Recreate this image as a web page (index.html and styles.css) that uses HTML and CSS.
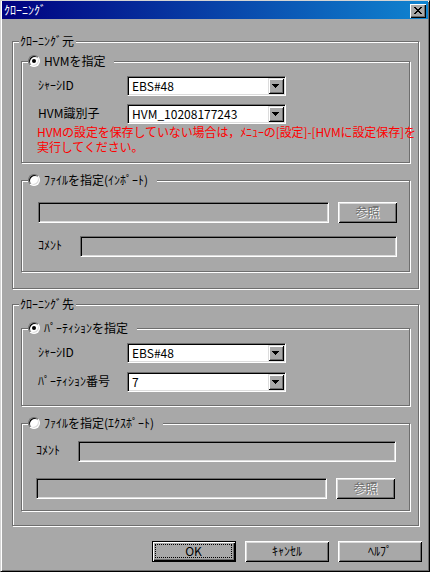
FILE: index.html
```html
<!DOCTYPE html>
<html lang="ja">
<head>
<meta charset="utf-8">
<title>ｸﾛｰﾆﾝｸﾞ</title>
<link rel="stylesheet" href="styles.css">
</head>
<body>
<div class="window">
  <div class="titlebar">
    <span class="title">ｸﾛｰﾆﾝｸﾞ</span>
    <span class="close"><svg width="8" height="7" viewBox="0 0 8 7"><path fill="#000" d="M0 0h2v1H0zM6 0h2v1H6zM1 1h2v1H1zM5 1h2v1H5zM2 2h4v1H2zM3 3h2v1H3zM2 4h4v1H2zM1 5h2v1H1zM5 5h2v1H5zM0 6h2v1H0zM6 6h2v1H6z"/></svg></span>
  </div>
  <div class="content">
    <div class="group outer g-src">
      <span class="legend">ｸﾛｰﾆﾝｸﾞ元</span>
      <div class="group sub sub-a">
        <span class="legend radio-legend"><span class="radio on"></span><span>HVMを指定</span></span>
        <div class="form form-a">
          <span class="label">ｼｬｰｼID</span>
          <div class="combo"><span class="combo-text">EBS#48</span><span class="combo-btn"><svg width="7" height="4" viewBox="0 0 7 4"><path fill="#000" d="M0 0h7v1H0zM1 1h5v1H1zM2 2h3v1H2zM3 3h1v1H3z"/></svg></span></div>
          <span class="label">HVM識別子</span>
          <div class="combo"><span class="combo-text">HVM_10208177243</span><span class="combo-btn"><svg width="7" height="4" viewBox="0 0 7 4"><path fill="#000" d="M0 0h7v1H0zM1 1h5v1H1zM2 2h3v1H2zM3 3h1v1H3z"/></svg></span></div>
        </div>
        <div class="warn">
          <span class="warn-line">HVMの設定を保存していない場合は，ﾒﾆｭｰの[設定]-[HVMに設定保存]を</span>
          <span class="warn-line">実行してください。</span>
        </div>
      </div>
      <div class="group sub sub-b">
        <span class="legend radio-legend"><span class="radio"></span><span>ﾌｧｲﾙを指定(ｲﾝﾎﾟｰﾄ)</span></span>
        <div class="path-row">
          <span class="field path"></span>
          <span class="btn small disabled">参照</span>
        </div>
        <div class="comment-row">
          <span class="label">ｺﾒﾝﾄ</span>
          <span class="field grow"></span>
        </div>
      </div>
    </div>

    <div class="group outer g-dst">
      <span class="legend">ｸﾛｰﾆﾝｸﾞ先</span>
      <div class="group sub sub-c">
        <span class="legend radio-legend"><span class="radio on"></span><span>ﾊﾟｰﾃｨｼｮﾝを指定</span></span>
        <div class="form form-c">
          <span class="label">ｼｬｰｼID</span>
          <div class="combo"><span class="combo-text">EBS#48</span><span class="combo-btn"><svg width="7" height="4" viewBox="0 0 7 4"><path fill="#000" d="M0 0h7v1H0zM1 1h5v1H1zM2 2h3v1H2zM3 3h1v1H3z"/></svg></span></div>
          <span class="label">ﾊﾟｰﾃｨｼｮﾝ番号</span>
          <div class="combo"><span class="combo-text">7</span><span class="combo-btn"><svg width="7" height="4" viewBox="0 0 7 4"><path fill="#000" d="M0 0h7v1H0zM1 1h5v1H1zM2 2h3v1H2zM3 3h1v1H3z"/></svg></span></div>
        </div>
      </div>
      <div class="group sub sub-d">
        <span class="legend radio-legend"><span class="radio"></span><span>ﾌｧｲﾙを指定(ｴｸｽﾎﾟｰﾄ)</span></span>
        <div class="comment-row">
          <span class="label">ｺﾒﾝﾄ</span>
          <span class="field grow"></span>
        </div>
        <div class="path-row d-path">
          <span class="field path"></span>
          <span class="btn small disabled">参照</span>
        </div>
      </div>
    </div>

    <div class="actions">
      <span class="btn default"><span class="focus">OK</span></span>
      <span class="btn">ｷｬﾝｾﾙ</span>
      <span class="btn">ﾍﾙﾌﾟ</span>
    </div>
  </div>
</div>
</body>
</html>
```
FILE: styles.css
```css
* { box-sizing: border-box; }
html, body { margin: 0; padding: 0; }
body {
  width: 430px;
  height: 572px;
  background: #a8a8a8;
  font-family: "Noto Sans CJK JP", "Liberation Sans", sans-serif;
  font-size: 12px;
  line-height: 12px;
  color: #000;
}
.window {
  width: 430px;
  height: 572px;
  border: 1px solid;
  border-color: #d4d4d4 #000 #000 #d4d4d4;
  box-shadow: inset 1px 1px #fff, inset -1px -1px #6e6e6e;
  padding: 0 1px 1px 1px;
  background: #a8a8a8;
  display: flex;
  flex-direction: column;
}
.titlebar {
  height: 18px;
  flex: none;
  display: flex;
  align-items: center;
  justify-content: space-between;
  padding: 0 2px 0 2px;
  background: linear-gradient(to right, #000080, #1084d0);
  color: #fff;
}
.title { line-height: 12px; }
.close {
  width: 16px;
  height: 14px;
  margin-top: 1px;
  background: #a8a8a8;
  box-shadow: inset 1px 1px #fff, inset -1px -1px #000, inset -2px -2px #6e6e6e;
  display: flex;
  align-items: center;
  justify-content: center;
}
.close svg { display: block; }
.content {
  padding: 22px 9px 0 10px;
  display: flex;
  flex-direction: column;
}
.group {
  position: relative;
  border: 1px solid #6e6e6e;
  box-shadow: 1px 1px 0 #fff, inset 1px 1px 0 #fff;
}
.legend {
  position: absolute;
  top: -7px;
  left: 6px;
  height: 12px;
  background: #a8a8a8;
  padding: 0 2px 0 1px;
  white-space: nowrap;
}
.radio-legend {
  display: flex;
  align-items: center;
  gap: 4px;
  padding: 0 9px 0 0;
}
.radio {
  position: relative;
  width: 12px;
  height: 12px;
  flex: none;
  border-radius: 50%;
  background: #fff;
  border: 1px solid;
  border-color: #6e6e6e #fff #fff #6e6e6e;
  box-shadow: inset 1px 1px 0 #000, inset -1px -1px 0 #dcdcdc;
}
.radio.on::after {
  content: "";
  position: absolute;
  left: 3px;
  top: 3px;
  width: 4px;
  height: 4px;
  border-radius: 50%;
  background: #000;
}
.g-src { padding: 19px 8px 16px 8px; }
.g-dst { margin-top: 15px; padding: 23px 8px 14px 8px; }
.sub-a { padding: 14px 12px 9px 16px; }
.sub-b { margin-top: 17px; padding: 21px 12px 14px 16px; }
.sub-c { padding: 14px 12px 13px 16px; }
.sub-d { margin-top: 17px; padding: 17px 13px 11px 14px; }
.form {
  display: grid;
  grid-template-columns: 89px 159px;
  align-items: center;
}
.form-a { row-gap: 8px; }
.form-c { row-gap: 9px; }
.label { padding-bottom: 3px; white-space: nowrap; }
.combo {
  height: 20px;
  border: 1px solid;
  border-color: #6e6e6e #fff #fff #6e6e6e;
  box-shadow: inset 1px 1px 0 #000, inset -1px -1px 0 #dcdcdc;
  background: #fff;
  padding: 1px;
  display: flex;
  align-items: center;
}
.combo-text { padding-left: 3px; flex: 1; }
.combo-btn {
  width: 16px;
  height: 16px;
  background: #a8a8a8;
  box-shadow: inset 1px 1px 0 #dcdcdc, inset -1px -1px 0 #000, inset 2px 2px 0 #fff, inset -2px -2px 0 #6e6e6e;
  display: flex;
  align-items: center;
  justify-content: center;
}
.combo-btn svg { display: block; margin-left: -1px; }
.warn {
  margin: 2px 0 0 -1px;
  color: #f00;
  display: flex;
  flex-direction: column;
  gap: 3px;
}
.warn-line {
  display: block;
  height: 12px;
  line-height: 12px;
  letter-spacing: -0.1px;
  white-space: nowrap;
}
.path-row {
  display: flex;
  gap: 9px;
}
.comment-row {
  display: flex;
  align-items: center;
}
.sub-b .comment-row { margin-top: 13px; }
.d-path { margin-top: 16px; }
.comment-row .label { width: 42px; flex: none; }
.field {
  height: 21px;
  border: 1px solid;
  border-color: #6e6e6e #fff #fff #6e6e6e;
  box-shadow: inset 1px 1px 0 #000, inset -1px -1px 0 #dcdcdc;
  background: #a8a8a8;
}
.field.path { width: 291px; flex: none; }
.field.grow { flex: 1; }
.btn {
  width: 84px;
  height: 21px;
  background: #a8a8a8;
  box-shadow: inset 1px 1px 0 #fff, inset -1px -1px 0 #000, inset 2px 2px 0 #dcdcdc, inset -2px -2px 0 #6e6e6e;
  display: flex;
  align-items: center;
  justify-content: center;
  padding-bottom: 1px;
}
.btn.small { width: 59px; }
.btn.disabled { color: #6e6e6e; text-shadow: 1px 1px 0 #fff; }
.btn.default {
  border: 1px solid #000;
  box-shadow: inset 1px 1px 0 #fff, inset -1px -1px 0 #000, inset -2px -2px 0 #6e6e6e;
  padding: 2px 3px 3px 2px;
}
.focus {
  flex: 1;
  align-self: stretch;
  border: 1px dotted #000;
  display: flex;
  align-items: center;
  justify-content: center;
}
.actions {
  margin-top: 15px;
  margin-right: -3px;
  display: flex;
  justify-content: flex-end;
  gap: 9px;
}
```
